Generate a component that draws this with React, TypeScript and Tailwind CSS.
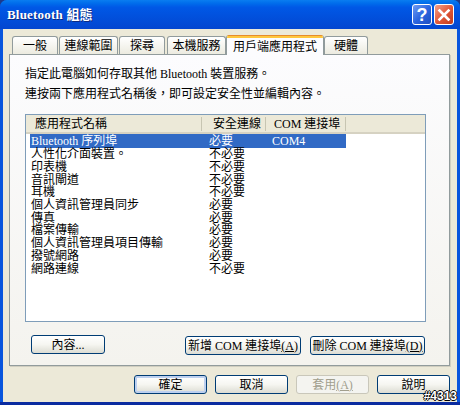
const font = "font-['Liberation_Serif','Noto_Sans_CJK_TC',serif]";

function Tab({ label, className, active }: { label: string; className: string; active?: boolean }) {
  if (active) {
    return (
      <div className={`relative z-10 flex flex-col h-[20px] -mb-px bg-[#fcfcfe] border-x border-[#919b9c] rounded-t-[3px] overflow-hidden ${className}`}>
        <div className="h-[3px] shrink-0 bg-[#ffc73c] border-t border-[#e68b2c]" />
        <div className="flex-1 flex items-center justify-center text-[12px] leading-none text-black">{label}</div>
      </div>
    );
  }
  return (
    <div className={`flex items-center justify-center h-[18px] border-x border-t border-[#919b9c] rounded-t-[3px] bg-gradient-to-b from-white to-[#ecebe0] text-[12px] leading-none text-black ${className}`}>
      {label}
    </div>
  );
}

function Btn({ label, className, disabled, def }: { label: React.ReactNode; className: string; disabled?: boolean; def?: boolean }) {
  return (
    <div
      className={`flex items-center justify-center h-[19px] rounded-[3px] border text-[12px] leading-none whitespace-nowrap ${
        disabled
          ? "border-[#c9c7ba] bg-[#f4f4f0] text-[#a19e8d]"
          : "border-[#003c74] bg-gradient-to-b from-white via-[#f6f6f1] to-[#dcdcd3] text-black"
      } ${def ? "shadow-[inset_0_0_0_2px_#bdd0ef]" : ""} ${className}`}
    >
      {label}
    </div>
  );
}

const rows = [
  ["人性化介面裝置。", "不必要"],
  ["印表機", "不必要"],
  ["音訊閘道", "不必要"],
  ["耳機", "不必要"],
  ["個人資訊管理員同步", "必要"],
  ["傳真", "必要"],
  ["檔案傳輸", "必要"],
  ["個人資訊管理員項目傳輸", "必要"],
  ["撥號網路", "必要"],
  ["網路連線", "不必要"],
];

export default function App() {
  return (
    <div className={`relative w-[460px] h-[405px] overflow-hidden bg-[#1c3a8c] ${font}`}>
      <div className="w-full h-full flex flex-col rounded-t-[7px] overflow-hidden bg-[#0855dd] border-b-[3px] border-[#0a2ba0]">
        {/* Title bar */}
        <div className="h-[29px] shrink-0 flex items-center pl-[7px] pr-[6px] bg-gradient-to-b from-[#0a7df0] via-[#0058e6] via-[25%] to-[#0346d0]">
          <span className="flex-1 text-[13px] font-bold text-white leading-none tracking-[0.2px] [text-shadow:1px_1px_0_#0f2a80]">Bluetooth 組態</span>
          <div className="w-[20px] h-[21px] mr-[2px] rounded-[3px] border border-white flex items-center justify-center bg-gradient-to-br from-[#6f9bf2] via-[#2c66e0] to-[#1f4fc2] text-white text-[18px] font-bold font-['Liberation_Sans',sans-serif] leading-none">
            ?
          </div>
          <div className="w-[20px] h-[21px] rounded-[3px] border border-white flex items-center justify-center bg-gradient-to-br from-[#f0a08a] via-[#e2593a] to-[#c03a1c]">
            <svg width="14" height="14" viewBox="0 0 14 14">
              <path d="M2.5 2.5 L11.5 11.5 M11.5 2.5 L2.5 11.5" stroke="#fff" strokeWidth="2.6" strokeLinecap="square" />
            </svg>
          </div>
        </div>

        {/* Client */}
        <div className="flex-1 mx-[3px] bg-[#ece9d8] flex flex-col pl-[6px] pr-[7px]">
          <div className="flex items-end h-[25px] pt-[5px] shrink-0 pl-[3px]">
            <Tab label="一般" className="w-[46px] mr-[1px]" />
            <Tab label="連線範圍" className="w-[59px] mr-[1px]" />
            <Tab label="探尋" className="w-[46px] mr-[2px]" />
            <Tab label="本機服務" className="w-[59px]" />
            <Tab label="用戶端應用程式" className="w-[98px]" active />
            <Tab label="硬體" className="w-[44px]" />
          </div>

          {/* Panel */}
          <div className="h-[312px] shrink-0 border border-[#919b9c] bg-gradient-to-b from-[#fcfcfe] to-[#f4f3ee] flex flex-col pl-[15px] pr-[23px] shadow-[1px_1px_0_#d0cec0]">
            <div className="h-[12px] shrink-0" />
            <p className="h-[15px] text-[12px] leading-[15px] text-black">指定此電腦如何存取其他 Bluetooth 裝置服務。</p>
            <p className="mt-[5px] h-[15px] text-[12px] leading-[15px] text-black">連按兩下應用程式名稱後{"\uFF0C"}即可設定安全性並編輯內容。</p>

            {/* List */}
            <div className="mt-[12px] h-[208px] shrink-0 border border-[#7f9db9] bg-white flex flex-col">
              <div className="h-[19px] shrink-0 flex items-center bg-[#ece9d8] border-b-2 border-[#d6d2c2] text-[12px] leading-none text-black">
                <div className="w-[176px] pl-[9px] border-r border-[#c7c5b2] h-[14px] flex items-center">應用程式名稱</div>
                <div className="w-[64px] pl-[11px] border-r border-[#c7c5b2] h-[14px] flex items-center">安全連線</div>
                <div className="w-[80px] pl-[8px] border-r border-[#c7c5b2] h-[14px] flex items-center whitespace-nowrap">COM 連接埠</div>
              </div>
              <div className="h-[14px] w-[316px] ml-[4px] shrink-0 flex items-center bg-[#316ac5] text-white text-[12px] leading-none">
                <div className="w-[179px] pl-[1px]">Bluetooth 序列埠</div>
                <div className="w-[63px]">必要</div>
                <div>COM4</div>
              </div>
              {rows.map(([a, b], i) => (
                <div key={i} className="h-[12.7px] ml-[4px] shrink-0 flex items-center text-[12px] leading-none text-black">
                  <div className="w-[179px] pl-[1px] whitespace-nowrap">{a}</div>
                  <div>{b}</div>
                </div>
              ))}
            </div>

            <div className="mt-[13px] flex items-start">
              <Btn label="內容..." className="w-[74px] ml-[6px]" />
              <Btn label={<>新增 COM 連接埠<span className="underline">(A)</span></>} className="w-[116px] ml-[80px] mt-[1px]" />
              <Btn label={<>刪除 COM 連接埠<span className="underline">(D)</span></>} className="w-[115px] ml-[9px] mt-[1px]" />
            </div>
          </div>

          {/* Bottom buttons */}
          <div className="flex justify-end gap-[8px] mt-[9px]">
            <Btn label="確定" className="w-[73px]" def />
            <Btn label="取消" className="w-[73px]" />
            <Btn label={<>套用<span className="underline">(A)</span></>} className="w-[73px]" disabled />
            <Btn label="說明" className="w-[73px]" />
          </div>
        </div>
      </div>
      <div className="absolute right-[3px] bottom-[3px] text-[12px] leading-none font-bold font-['Liberation_Sans',sans-serif] text-white [text-shadow:1px_0_0_#000,-1px_0_0_#000,0_1px_0_#000,0_-1px_0_#000]">#4313</div>
    </div>
  );
}
